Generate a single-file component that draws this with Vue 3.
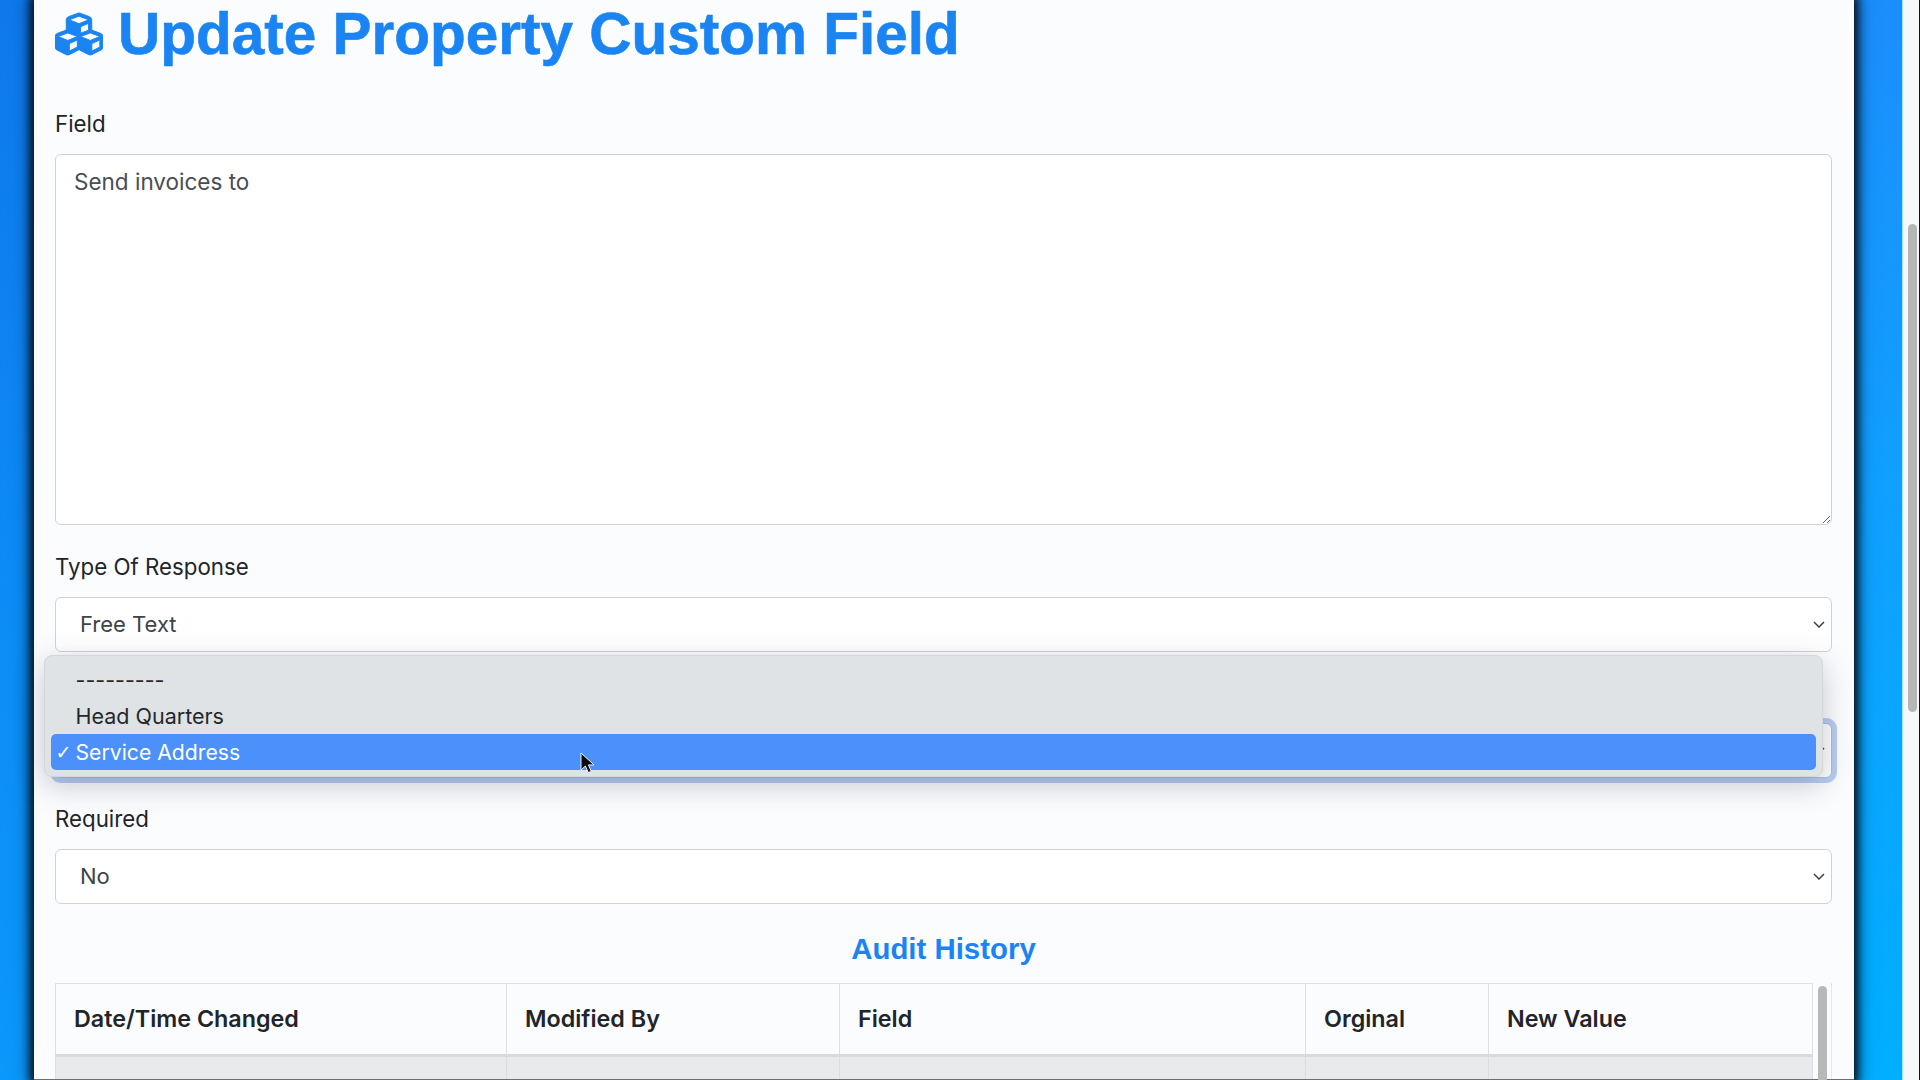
<script setup>
const columns = [
  { label: 'Date/Time Changed', cls: 'c1' },
  { label: 'Modified By', cls: 'c2' },
  { label: 'Field', cls: 'c3' },
  { label: 'Orginal', cls: 'c4' },
  { label: 'New Value', cls: 'c5' },
]
const options = [
  { label: '---------', selected: false },
  { label: 'Head Quarters', selected: false },
  { label: 'Service Address', selected: true },
]
</script>

<template>
  <div class="page">
    <main class="panel">
      <h1 class="title">
        <svg class="title-icon" viewBox="0 0 512 512" aria-hidden="true">
          <path fill="currentColor" stroke="currentColor" stroke-width="10" d="M488.6 250.2L392 214V105.5c0-15-9.3-28.4-23.4-33.7l-100-37.5c-8.1-3.1-17.1-3.1-25.3 0l-100 37.5c-14.1 5.3-23.4 18.7-23.4 33.7V214l-96.6 36.2C9.3 255.5 0 268.9 0 283.9V394c0 13.6 7.7 26.1 19.9 32.2l100 50c10.1 5.1 22.1 5.1 32.2 0l103.9-52 103.9 52c10.1 5.1 22.1 5.1 32.2 0l100-50c12.2-6.1 19.9-18.6 19.9-32.2V283.9c0-15-9.3-28.4-23.4-33.7zM358 214.8l-85 31.9v-68.2l85-37v73.3zM154 104.1l102-38.2 102 38.2v.6l-102 41.4-102-41.4v-.6zm84 291.1l-85 42.5v-79.1l85-38.8v75.4zm0-112l-102 41.4-102-41.4v-.6l102-38.2 102 38.2v.6zm240 112l-85 42.5v-79.1l85-38.8v75.4zm0-112l-102 41.4-102-41.4v-.6l102-38.2 102 38.2v.6z"/>
        </svg>
        <span>Update Property Custom Field</span>
      </h1>

      <div class="group group-field">
        <label class="label">Field</label>
        <textarea class="textarea" readonly>Send invoices to</textarea>
      </div>

      <div class="group">
        <label class="label">Type Of Response</label>
        <div class="select">
          <span>Free Text</span>
          <svg class="chevron" viewBox="0 0 12 7"><path d="M1 1l5 5 5-5" /></svg>
        </div>
      </div>

      <div class="group">
        <div class="label"></div>
        <div class="select select-focus">
          <span></span>
          <svg class="chevron" viewBox="0 0 12 7"><path d="M1 1l5 5 5-5" /></svg>
        </div>
        <ul class="menu">
          <li v-for="o in options" :key="o.label" class="option" :class="{ 'option-on': o.selected }">
            <span class="tick">{{ o.selected ? '✓' : '' }}</span>
            <span>{{ o.label }}</span>
          </li>
        </ul>
        <svg class="cursor" viewBox="0 0 16 22">
          <path d="M1 1v17l4.4-4 2.9 6.6 3-1.3-2.9-6.4H14z" fill="#0b0b0b" stroke="#e8f2ff" stroke-width="1" />
        </svg>
      </div>

      <div class="group">
        <label class="label">Required</label>
        <div class="select">
          <span>No</span>
          <svg class="chevron" viewBox="0 0 12 7"><path d="M1 1l5 5 5-5" /></svg>
        </div>
      </div>

      <h2 class="subtitle">Audit History</h2>

      <div class="table-wrap">
        <table class="table">
          <thead>
            <tr>
              <th v-for="c in columns" :key="c.label" :class="c.cls">{{ c.label }}</th>
            </tr>
          </thead>
          <tbody>
            <tr>
              <td v-for="c in columns" :key="c.label"></td>
            </tr>
          </tbody>
        </table>
        <div class="table-scroll"><div class="table-thumb"></div></div>
      </div>
    </main>
    <div class="blue-gap"></div>
    <aside class="page-scroll"><div class="page-thumb"></div></aside>
  </div>
</template>

<style>
html, body { margin: 0; padding: 0; overflow: hidden; }
</style>

<style scoped>
.page {
  display: flex;
  width: 1920px;
  height: 1080px;
  overflow: hidden;
  box-sizing: border-box;
  padding-left: 34px;
  background: linear-gradient(180deg, #0f78ec 0%, #0d8af6 50%, #0b98fb 100%);
  font-family: Inter, "Liberation Sans", sans-serif;
  color: #212529;
}
.panel {
  position: relative;
  z-index: 1;
  flex: none;
  width: 1820px;
  height: 1080px;
  box-sizing: border-box;
  padding: 0 22px 0 21px;
  background: #fbfcfe;
  box-shadow: 0 0 8px 4px rgba(6, 18, 30, 0.95), 0 0 16px 4px rgba(0, 20, 40, 0.5);
  border-bottom: 1px solid #6c6f72;
  overflow: visible;
}
.blue-gap {
  flex: 1;
  background: linear-gradient(180deg, #1b8efc 0%, #10a0ff 45%, #00aeff 100%);
  border-right: 1px solid #9fe3ff;
}
.page-scroll {
  flex: none;
  width: 17px;
  padding: 224px 2px 0 5px;
  box-sizing: border-box;
  background: #f7f8f9;
  border-right: 1px solid #111;
}
.page-thumb {
  width: 9px;
  height: 488px;
  border-radius: 5px;
  background: #b6b6b6;
}
.title {
  display: flex;
  align-items: center;
  gap: 15px;
  margin: 0 0 43px;
  height: 67px;
  font-family: "Liberation Sans", Arial, sans-serif;
  font-weight: 700;
  font-size: 58.5px;
  line-height: 54px;
  color: #1a84f2;
  -webkit-text-stroke: 0.6px #1a84f2;
}
.title-icon { width: 48px; height: 48px; flex: none; }
.group { margin-bottom: 27.5px; position: relative; }
.group-field { padding-bottom: 1px; }
.label {
  display: block;
  height: 29px;
  line-height: 27px;
  margin-bottom: 14.5px;
  font-size: 22.3px;
  color: #212529;
}
.textarea {
  display: block;
  width: 100%;
  height: 371px;
  box-sizing: border-box;
  padding: 12px 18px;
  border: 1.5px solid #cfd3d7;
  border-radius: 6px;
  background: #fff;
  font-family: inherit;
  font-size: 22.5px;
  line-height: 29px;
  color: #484e53;
  outline: none;
}
.select {
  display: flex;
  align-items: center;
  justify-content: space-between;
  height: 55px;
  box-sizing: border-box;
  padding: 0 6px 0 24px;
  border: 1.5px solid #cfd3d7;
  border-radius: 6px;
  background: #fff;
  font-size: 22px;
  color: #3e4348;
}
.select-focus {
  border-color: #aebfdd;
  box-shadow: 0 0 0 5px #b9cdf3;
}
.chevron {
  width: 12px;
  height: 7px;
  fill: none;
  stroke: #3c4145;
  stroke-width: 1.5;
}
.menu {
  position: absolute;
  z-index: 3;
  left: -11.5px;
  top: -24px;
  width: 1779px;
  height: 122px;
  margin: 0;
  padding: 6px 6px 0;
  box-sizing: border-box;
  list-style: none;
  background: #dfe3e6;
  border: 1px solid #d3d7da;
  border-radius: 8px;
  box-shadow: 0 8px 30px rgba(40, 50, 60, 0.26);
}
.option {
  display: flex;
  align-items: center;
  height: 36px;
  border-radius: 5px;
  font-size: 21.5px;
  color: #24282c;
}
.option-on {
  background: #4b90fb;
  color: #fff;
  font-size: 21.2px;
}
.tick {
  width: 25px;
  flex: none;
  box-sizing: border-box;
  padding-left: 5px;
  font-size: 19px;
  font-family: "DejaVu Sans", sans-serif;
}
.cursor {
  position: absolute;
  z-index: 4;
  left: 525px;
  top: 73px;
  width: 16px;
  height: 22px;
}
.subtitle {
  margin: 28px 0 17px;
  height: 34px;
  line-height: 34px;
  text-align: center;
  font-family: "Liberation Sans", Arial, sans-serif;
  font-weight: 700;
  font-size: 29.4px;
  color: #1a84f2;
}
.table-wrap {
  display: flex;
  height: 96px;
  border-right: 1.5px solid #e6e7e9;
}
.table {
  flex: none;
  width: 1757px;
  height: 96px;
  table-layout: fixed;
  border-collapse: collapse;
  border: 1.5px solid #dee0e3;
  border-bottom: 0;
}
.c1 { width: 451px; }
.c2 { width: 333px; }
.c3 { width: 466px; }
.c4 { width: 183px; }
.c5 { width: 324px; }
th {
  height: 72px;
  padding: 0 0 0 18px;
  box-sizing: border-box;
  text-align: left;
  font-size: 23.3px;
  font-weight: 600;
  color: #212529;
  border-right: 1.5px solid #dee0e3;
  border-bottom: 3px solid #d9dadd;
}
td {
  background: #e9eaec;
  border-right: 1.5px solid #dcdde0;
}
.table-scroll {
  flex: 1;
  padding: 3px 4px 0 5px;
}
.table-thumb {
  height: 100px;
  border-radius: 5px 5px 0 0;
  background: #b8b8b8;
}
</style>
